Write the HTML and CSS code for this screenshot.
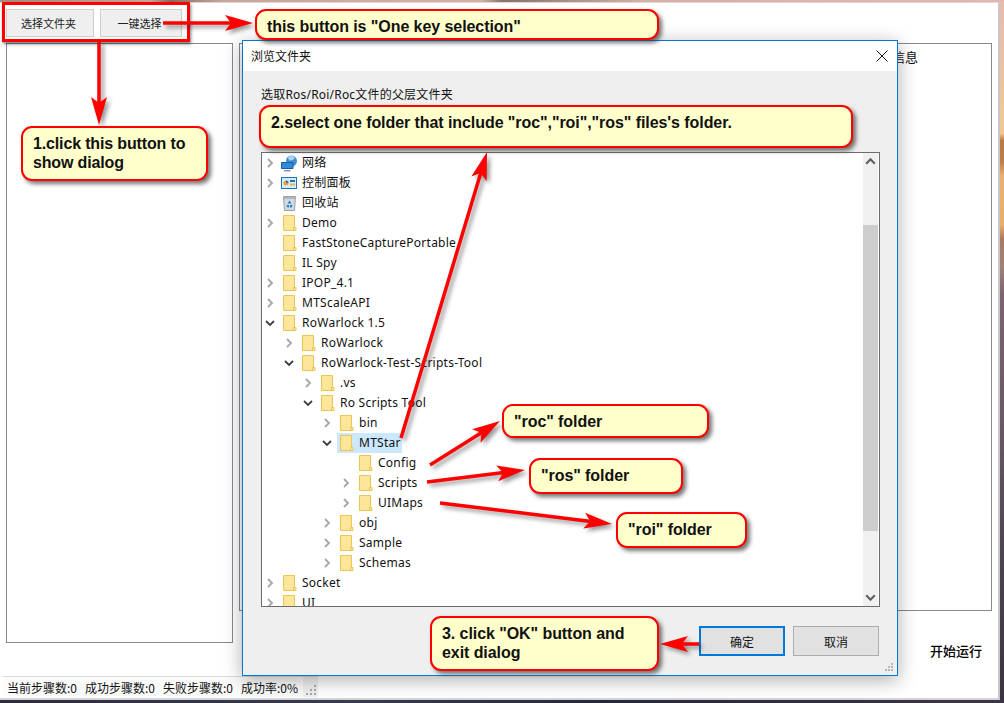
FILE: index.html
```html
<!DOCTYPE html>
<html lang="zh">
<head>
<meta charset="utf-8">
<title>选择文件夹</title>
<link rel="stylesheet" href="styles.css">
</head>
<body>
<svg class="defs" width="0" height="0" aria-hidden="true">
  <defs>
    <symbol id="i-folder" viewBox="0 0 15 18">
      <path d="M1.500 1.500h11v12h1.500v3h-12.500z" fill="#fde69a" stroke="#ecc552"/>
      <path d="M11.500 16.500v-3h2" fill="none" stroke="#ecc552"/>
    </symbol>
    <symbol id="i-net" viewBox="0 0 17 17">
      <circle cx="10.500" cy="6" r="5.500" fill="#3f8fd2"/>
      <path d="M7 2.500c2-2 5-2 7 0l-2 2.500-4 .5z" fill="#a8d4f0"/>
      <path d="M.5 7.500h11.500v6H.5z" fill="#2f8ae0" stroke="#1c5f9f"/>
      <path d="M3 15h6.500v1.500H3z" fill="#7c99b5"/>
    </symbol>
    <symbol id="i-panel" viewBox="0 0 16 12">
      <rect x=".5" y=".5" width="15" height="11" fill="#d5ecfb" stroke="#1f70bd"/>
      <circle cx="5" cy="6" r="2.500" fill="#f0a030"/>
      <path d="M5 3.500a2.500 2.500 0 0 1 2.500 2.500H5z" fill="#2d78c4"/>
      <path d="M9 3h5v2H9z" fill="#1f70bd"/>
      <path d="M9 6.500h5v2H9z" fill="#f0b040"/>
    </symbol>
    <symbol id="i-bin" viewBox="0 0 13 16">
      <path d="M.5 1.500h12l-1 14h-10z" fill="#d5dade" stroke="#9aa1a8"/>
      <path d="M1 3h11" stroke="#8d949b" fill="none"/>
      <path d="M6.500 5.500l2 3h-4zM3.500 10h2.500v2.500H4.500zM7 10h2.500l-1 2.500H7z" fill="#1f7fd0"/>
    </symbol>
    <marker id="head" markerUnits="userSpaceOnUse" viewBox="0 -9 28 18" markerWidth="28" markerHeight="18" refX="13" refY="0" orient="auto">
      <path d="M0-8 28 0 0 8 6 0z" fill="#f00"/>
    </marker>
  </defs>
</svg>

<div class="window">
  <div class="toolbar">
    <button class="btn btn-folder" type="button">选择文件夹</button>
    <button class="btn btn-key" type="button">一键选择</button>
  </div>
  <div class="main">
    <div class="panel panel-left"></div>
    <div class="side">
      <div class="panel panel-right"><span class="info">日志信息</span></div>
      <div class="run">开始运行</div>
    </div>
  </div>
  <div class="status">
    <div class="status-text">
      <span>当前步骤数:0</span><span>成功步骤数:0</span><span>失败步骤数:0</span><span>成功率:0%</span>
    </div>
    <svg class="grip" width="12" height="12" viewBox="0 0 12 12"><path d="M9 1h2v2H9zM5 5h2v2H5zM9 5h2v2H9zM1 9h2v2H1zM5 9h2v2H5zM9 9h2v2H9z" fill="#a9a9a9"/></svg>
  </div>
</div>

<div class="dialog">
  <div class="dlg-title">
    <span>浏览文件夹</span>
    <svg class="close" width="12" height="12" viewBox="0 0 12 12"><path d="M.5.500l11 11M11.500.500l-11 11" stroke="#111" fill="none"/></svg>
  </div>
  <div class="dlg-body">
    <p class="dlg-label">选取Ros/Roi/Roc文件的父层文件夹</p>
    <div class="tree">
      <ul class="rows">
        <li class="row l0"><svg class="chev" viewBox="0 0 8 12"><path d="M2 2l4 4-4 4"/></svg><svg class="ico ico-net"><use href="#i-net"/></svg><span>网络</span></li>
        <li class="row l0"><svg class="chev" viewBox="0 0 8 12"><path d="M2 2l4 4-4 4"/></svg><svg class="ico ico-panel"><use href="#i-panel"/></svg><span>控制面板</span></li>
        <li class="row l0"><i class="nochev"></i><svg class="ico ico-bin"><use href="#i-bin"/></svg><span>回收站</span></li>
        <li class="row l0"><svg class="chev" viewBox="0 0 8 12"><path d="M2 2l4 4-4 4"/></svg><svg class="ico"><use href="#i-folder"/></svg><span>Demo</span></li>
        <li class="row l0"><i class="nochev"></i><svg class="ico"><use href="#i-folder"/></svg><span>FastStoneCapturePortable</span></li>
        <li class="row l0"><i class="nochev"></i><svg class="ico"><use href="#i-folder"/></svg><span>IL Spy</span></li>
        <li class="row l0"><svg class="chev" viewBox="0 0 8 12"><path d="M2 2l4 4-4 4"/></svg><svg class="ico"><use href="#i-folder"/></svg><span>IPOP_4.1</span></li>
        <li class="row l0"><svg class="chev" viewBox="0 0 8 12"><path d="M2 2l4 4-4 4"/></svg><svg class="ico"><use href="#i-folder"/></svg><span>MTScaleAPI</span></li>
        <li class="row l0"><svg class="chev open" viewBox="0 0 10 12"><path d="M1 4l4 4 4-4"/></svg><svg class="ico"><use href="#i-folder"/></svg><span>RoWarlock 1.5</span></li>
        <li class="row l1"><svg class="chev" viewBox="0 0 8 12"><path d="M2 2l4 4-4 4"/></svg><svg class="ico"><use href="#i-folder"/></svg><span>RoWarlock</span></li>
        <li class="row l1"><svg class="chev open" viewBox="0 0 10 12"><path d="M1 4l4 4 4-4"/></svg><svg class="ico"><use href="#i-folder"/></svg><span>RoWarlock-Test-Scripts-Tool</span></li>
        <li class="row l2"><svg class="chev" viewBox="0 0 8 12"><path d="M2 2l4 4-4 4"/></svg><svg class="ico"><use href="#i-folder"/></svg><span>.vs</span></li>
        <li class="row l2"><svg class="chev open" viewBox="0 0 10 12"><path d="M1 4l4 4 4-4"/></svg><svg class="ico"><use href="#i-folder"/></svg><span>Ro Scripts Tool</span></li>
        <li class="row l3"><svg class="chev" viewBox="0 0 8 12"><path d="M2 2l4 4-4 4"/></svg><svg class="ico"><use href="#i-folder"/></svg><span>bin</span></li>
        <li class="row l3"><svg class="chev open" viewBox="0 0 10 12"><path d="M1 4l4 4 4-4"/></svg><div class="selected"><svg class="ico"><use href="#i-folder"/></svg><span>MTStar</span></div></li>
        <li class="row l4"><i class="nochev"></i><svg class="ico"><use href="#i-folder"/></svg><span>Config</span></li>
        <li class="row l4"><svg class="chev" viewBox="0 0 8 12"><path d="M2 2l4 4-4 4"/></svg><svg class="ico"><use href="#i-folder"/></svg><span>Scripts</span></li>
        <li class="row l4"><svg class="chev" viewBox="0 0 8 12"><path d="M2 2l4 4-4 4"/></svg><svg class="ico"><use href="#i-folder"/></svg><span>UIMaps</span></li>
        <li class="row l3"><svg class="chev" viewBox="0 0 8 12"><path d="M2 2l4 4-4 4"/></svg><svg class="ico"><use href="#i-folder"/></svg><span>obj</span></li>
        <li class="row l3"><svg class="chev" viewBox="0 0 8 12"><path d="M2 2l4 4-4 4"/></svg><svg class="ico"><use href="#i-folder"/></svg><span>Sample</span></li>
        <li class="row l3"><svg class="chev" viewBox="0 0 8 12"><path d="M2 2l4 4-4 4"/></svg><svg class="ico"><use href="#i-folder"/></svg><span>Schemas</span></li>
        <li class="row l0"><svg class="chev" viewBox="0 0 8 12"><path d="M2 2l4 4-4 4"/></svg><svg class="ico"><use href="#i-folder"/></svg><span>Socket</span></li>
        <li class="row l0"><svg class="chev" viewBox="0 0 8 12"><path d="M2 2l4 4-4 4"/></svg><svg class="ico"><use href="#i-folder"/></svg><span>UI</span></li>
      </ul>
      <div class="scrollbar">
        <svg class="sb-arrow" width="14" height="14" viewBox="0 0 14 14"><path d="M3 9l4-4 4 4" fill="none" stroke="#606060" stroke-width="2"/></svg>
        <div class="sb-track"><div class="sb-thumb"></div></div>
        <svg class="sb-arrow" width="14" height="14" viewBox="0 0 14 14"><path d="M3 5l4 4 4-4" fill="none" stroke="#606060" stroke-width="2"/></svg>
      </div>
    </div>
    <div class="dlg-actions">
      <button class="dbtn dbtn-ok" type="button">确定</button>
      <button class="dbtn" type="button">取消</button>
    </div>
    <svg class="dlg-grip" width="9" height="9" viewBox="0 0 9 9"><path d="M6 0h2v2H6zM3 3h2v2H3zM6 3h2v2H6zM0 6h2v2H0zM3 6h2v2H3zM6 6h2v2H6z" fill="#b5b5b5"/></svg>
  </div>
</div>

<div class="redbox"></div>

<svg class="arrows" width="1004" height="703" viewBox="0 0 1004 703" aria-hidden="true">
  <g class="arrow-lines">
    <path d="M163 23H238" marker-end="url(#head)"/>
    <path d="M99 42V110" marker-end="url(#head)"/>
    <path d="M401 438 482.700 166.400" marker-end="url(#head)"/>
    <path d="M430 465 487.300 429" marker-end="url(#head)"/>
    <path d="M427 482 510.100 471.800" marker-end="url(#head)"/>
    <path d="M440 503 597.100 522.200" marker-end="url(#head)"/>
    <path d="M699 644H675" marker-end="url(#head)"/>
  </g>
</svg>

<div class="note note-key">this button is "One key selection"</div>
<div class="note note-one">1.click this button to show dialog</div>
<div class="note note-two">2.select one folder that include "roc","roi","ros" files's folder.</div>
<div class="note note-roc">"roc" folder</div>
<div class="note note-ros">"ros" folder</div>
<div class="note note-roi">"roi" folder</div>
<div class="note note-ok">3. click "OK" button and exit dialog</div>
</body>
</html>
```
FILE: styles.css
```css
* { box-sizing: border-box; }
html, body { margin: 0; height: 100%; }
body {
  position: relative;
  width: 1004px;
  height: 703px;
  overflow: hidden;
  padding: 2px 4px 3px 0;
  font: 12px "Noto Sans CJK SC", "Noto Sans", sans-serif;
  color: #111;
  background:
    linear-gradient(90deg, #a88a80 0, #c9a596 15%, #8a6a60 17%, #c9a596 22%, #d8b0a4 48%, #8a7068 50%, #d8b0a4 64%, #e6b5ac 100%) 0 0 / 100% 2px no-repeat,
    linear-gradient(90deg, #2c2c3c 0, #3a3a50 35%, #26283a 60%, #3c3444 100%) 0 100% / 100% 3px no-repeat,
    linear-gradient(180deg, #e8baae 0, #efc896 18%, #efc690 19%, #b87a45 20%, #bb7e48 23%, #e8b070 25%, #e8ae6c 32%, #a97a62 34%, #a08078 38%, #7a6470 42%, #6a5868 60%, #4c4252 80%, #3a3242 100%);
}
.defs { position: absolute; }
.window {
  height: 698px;
  background: #fff;
  border-top: 1px solid #dcd6d4;
  border-right: 2px solid #c8c8c8;
  border-bottom: 2px solid #d4d4d4;
  display: flex;
  flex-direction: column;
}
.toolbar { display: flex; gap: 6px; padding: 6px 0 0 6px; height: 40px; flex: none; }
.btn {
  height: 28px;
  font: 11px "Noto Sans CJK SC", sans-serif;
  color: #222;
  background: #efefef;
  border: 1px solid #cfcfcf;
  padding: 0 3px 0 0;
}
.btn-folder { width: 88px; }
.btn-key { width: 82px; }
.main { display: flex; gap: 6px; padding-left: 6px; height: 633px; flex: none; }
.panel { border: 1px solid #868a8e; background: #fff; }
.panel-left { width: 227px; height: 600px; }
.side { width: 753px; height: 100%; position: relative; }
.panel-right { height: 568px; position: relative; padding: 3px 73px 0 0; text-align: right; }
.info { font-size: 13px; }
.run { text-align: right; font-size: 13px; font-weight: 500; color: #000; padding: 30px 10px 0 0; line-height: 20px; }
.status {
  margin-left: 3px;
  width: 315px;
  height: 21px;
  background: #f0f0f0;
  border-top: 1px solid #dcdcdc;
  display: flex;
  align-items: center;
  justify-content: space-between;
  flex: none;
}
.status-text {
  display: flex;
  gap: 8px;
  width: 300px;
  height: 20px;
  align-items: center;
  background: #fbfbfb;
  padding-left: 4px;
  white-space: nowrap;
}
.grip { margin-right: 1px; align-self: flex-end; margin-bottom: 1px; }

.dialog {
  position: absolute;
  left: 242px;
  top: 40px;
  width: 656px;
  height: 636px;
  background: #efefef;
  border: 1px solid #0078d7;
  box-shadow: 0 4px 18px rgba(0, 0, 0, .32);
  display: flex;
  flex-direction: column;
}
.dlg-title {
  height: 30px;
  flex: none;
  background: #fff;
  display: flex;
  align-items: center;
  justify-content: space-between;
  padding: 0 9px 0 8px;
  line-height: 30px;
}
.dlg-body { flex: 1; position: relative; padding: 15px 17px 0 18px; }
.dlg-label { margin: 0 0 48px; height: 18px; line-height: 18px; letter-spacing: .2px; font-family: "Noto Sans", "Noto Sans CJK SC", sans-serif; }
.tree {
  height: 455px;
  background: #fff;
  border: 1px solid #6c6c6c;
  display: flex;
  overflow: hidden;
}
.rows { list-style: none; margin: 0; padding: 0; flex: 1; overflow: hidden; min-width: 0; }
.row { display: flex; align-items: center; height: 20px; white-space: nowrap; letter-spacing: .25px; font: 12px/20px "Noto Sans", "Noto Sans CJK SC", sans-serif; }
.l0 { padding-left: 3px; }
.l1 { padding-left: 22px; }
.l2 { padding-left: 41px; }
.l3 { padding-left: 60px; }
.l4 { padding-left: 79px; }
.chev, .nochev { width: 10px; height: 12px; flex: none; margin-right: 7px; display: block; }
.chev { fill: none; stroke: #a6a6a6; stroke-width: 1.800; }
.chev.open { stroke: #404040; }
.ico { width: 15px; height: 18px; flex: none; margin-right: 5px; }
.ico-net { width: 17px; height: 17px; margin: 0 4px 0 -1px; }
.ico-panel { width: 16px; height: 12px; margin: 0 5px 0 -1px; }
.ico-bin { width: 13px; height: 16px; margin: 0 6px 0 1px; }
.selected { display: flex; align-items: center; height: 20px; background: #cce8ff; margin-left: -2px; padding: 0 1px 0 2px; }
.scrollbar { width: 15px; flex: none; background: #f0f0f0; display: flex; flex-direction: column; margin-right: 1px; }
.sb-arrow { display: block; flex: none; height: 17px; width: 15px; }
.sb-track { flex: 1; padding-top: 55px; }
.sb-thumb { height: 306px; background: #cdcdcd; }
.dlg-actions { display: flex; justify-content: flex-end; gap: 8px; padding: 19px 1px 0 0; }
.dbtn {
  width: 86px;
  height: 30px;
  padding: 0;
  background: #e1e1e1;
  border: 1px solid #adadad;
  font: 12px "Noto Sans CJK SC", sans-serif;
  color: #111;
}
.dbtn-ok { border: 2px solid #0078d7; }
.dlg-grip { position: absolute; right: 3px; bottom: 3px; }

.redbox {
  position: absolute;
  left: 2px;
  top: 2px;
  width: 188px;
  height: 40px;
  border: 3px solid #f00;
  box-shadow: 1px 2px 3px rgba(0, 0, 0, .5);
}
.arrows { position: absolute; left: 0; top: 0; pointer-events: none; }
.arrow-lines { fill: none; stroke: #f00; stroke-width: 3.500; filter: drop-shadow(3px 3px 2px rgba(0, 0, 0, .4)); }

.note {
  position: absolute;
  background: #ffc;
  border: 2px solid #f00;
  border-radius: 11px;
  box-shadow: 3px 3px 4px rgba(60, 60, 60, .7);
  padding: 6px 10px;
  font: bold 16px/19px "Liberation Sans", Arial, sans-serif;
  letter-spacing: -.07px;
  color: #111;
}
.note-key { left: 255px; top: 9px; width: 404px; height: 31px; }
.note-one { left: 21px; top: 126px; width: 187px; height: 55px; letter-spacing: -.15px; }
.note-two { left: 259px; top: 105px; width: 594px; height: 43px; }
.note-roc { left: 502px; top: 404px; width: 207px; height: 34px; }
.note-ros { left: 529px; top: 458px; width: 154px; height: 36px; }
.note-roi { left: 616px; top: 512px; width: 131px; height: 36px; }
.note-ok { left: 430px; top: 616px; width: 229px; height: 55px; }
```
